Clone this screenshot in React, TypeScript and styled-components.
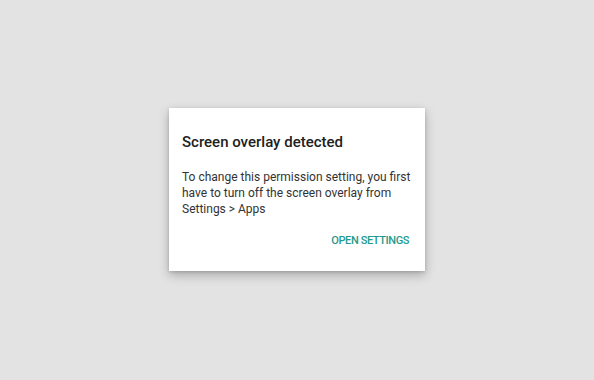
import React from "react";
import styled, { createGlobalStyle } from "styled-components";

const Global = createGlobalStyle`
  html, body { margin: 0; padding: 0; }
  body { background: #e3e3e3; font-family: Roboto, "Noto Sans", sans-serif; }
`;

const Screen = styled.div`
  width: 594px;
  height: 380px;
  display: flex;
  align-items: flex-start;
  justify-content: flex-start;
  padding: 108px 0 0 169px;
  box-sizing: border-box;
`;

const Dialog = styled.div`
  width: 256px;
  height: 163px;
  box-sizing: border-box;
  background: #ffffff;
  box-shadow: 0 4px 10px rgba(0, 0, 0, 0.26), 0 1px 3px rgba(0, 0, 0, 0.14);
  padding: 24px 14px 0 13px;
  display: flex;
  flex-direction: column;
`;

const Title = styled.h2`
  margin: 0;
  font-size: 15px;
  font-weight: 500;
  color: #212121;
  line-height: 20px;
`;

const Body = styled.p`
  margin: 17px 0 0;
  font-size: 12px;
  line-height: 16px;
  color: #333333;
`;

const Actions = styled.div`
  display: flex;
  justify-content: flex-end;
  margin-top: 17px;
  padding-right: 2px;
`;

const ActionButton = styled.button`
  border: none;
  background: none;
  padding: 0;
  font-family: Roboto, sans-serif;
  font-size: 11px;
  line-height: 13px;
  font-weight: 500;
  color: #1f9a8c;
  letter-spacing: -0.4px;
`;

export default function App() {
  return (
    <>
      <Global />
      <Screen>
        <Dialog>
          <Title>Screen overlay detected</Title>
          <Body>
            To change this permission setting, you first have to turn off the screen overlay from Settings &gt; Apps
          </Body>
          <Actions>
            <ActionButton>OPEN SETTINGS</ActionButton>
          </Actions>
        </Dialog>
      </Screen>
    </>
  );
}
